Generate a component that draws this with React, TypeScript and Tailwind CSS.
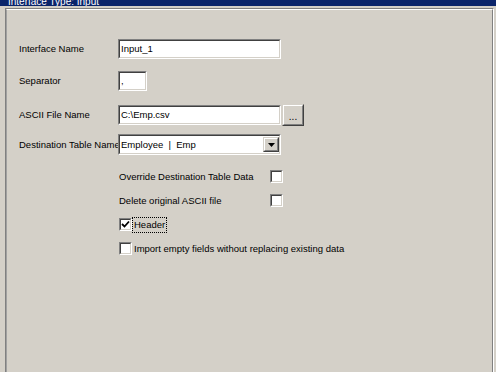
import React from "react";

function Sunken({ className = "", children }: { className?: string; children?: React.ReactNode }) {
  return (
    <div className={`border border-t-[#808080] border-l-[#808080] border-b-white border-r-white ${className}`}>
      <div className="h-full w-full border border-t-[#404040] border-l-[#404040] border-b-[#d4d0c8] border-r-[#d4d0c8] bg-white flex items-center">
        {children}
      </div>
    </div>
  );
}

function Raised({ className = "", children }: { className?: string; children?: React.ReactNode }) {
  return (
    <div className={`border border-t-[#d4d0c8] border-l-[#d4d0c8] border-b-[#404040] border-r-[#404040] ${className}`}>
      <div className="h-full w-full border border-t-white border-l-white border-b-[#808080] border-r-[#808080] bg-[#d4d0c8] flex items-center justify-center">
        {children}
      </div>
    </div>
  );
}

function CheckBox({ checked = false }: { checked?: boolean }) {
  return (
    <Sunken className="w-[13px] h-[13px] shrink-0">
      {checked ? (
        <svg width="9" height="9" viewBox="0 0 9 9" className="block">
          <polyline points="1,4 3.5,6.5 8,1.5" fill="none" stroke="#000" strokeWidth="1.8" />
        </svg>
      ) : null}
    </Sunken>
  );
}

export default function App() {
  return (
    <div className="w-[496px] h-[372px] bg-[#d4d0c8] overflow-hidden font-[Liberation_Sans,Arial,sans-serif] text-[9.5px] leading-[12px] text-black">
      <div className="h-[6px] bg-[#0a246a] overflow-hidden">
        <div className="-mt-[4px] pl-[8px] text-white text-[10px] leading-[12px] whitespace-nowrap">
          Interface Type: Input
        </div>
      </div>
      <div className="mt-[2px] ml-[5px] w-[489px] h-[400px] border-l border-t border-r border-l-[#808080] border-t-[#808080] border-r-white">
        <div className="h-full border-l border-t border-r border-l-[#a0a0a0] border-t-white border-r-[#808080] pl-[12px] pt-[29px]">
          {/* Interface Name */}
          <div className="flex items-center h-[20px]">
            <div className="w-[99px] shrink-0 whitespace-nowrap">Interface Name</div>
            <Sunken className="w-[163px] h-[20px]">
              <span className="pl-[1px]">Input_1</span>
            </Sunken>
          </div>
          {/* Separator */}
          <div className="flex items-center h-[20px] mt-[12px]">
            <div className="w-[99px] shrink-0 whitespace-nowrap">Separator</div>
            <Sunken className="w-[29px] h-[20px]">
              <span className="pl-[1px]">,</span>
            </Sunken>
          </div>
          {/* ASCII File Name */}
          <div className="flex items-center h-[22px] mt-[13px]">
            <div className="w-[99px] shrink-0 whitespace-nowrap">ASCII File Name</div>
            <Sunken className="w-[163px] h-[20px]">
              <span className="pl-[1px]">C:\Emp.csv</span>
            </Sunken>
            <Raised className="ml-[1px] w-[22px] h-[22px]">
              <span className="mt-[4px] text-[10px]">...</span>
            </Raised>
          </div>
          {/* Destination Table Name */}
          <div className="flex items-center h-[21px] mt-[8px]">
            <div className="w-[99px] shrink-0 whitespace-nowrap overflow-visible">Destination Table Name</div>
            <Sunken className="w-[163px] h-[21px] relative">
              <span className="pl-[1px] whitespace-pre flex-1">Employee  |  Emp</span>
              <Raised className="w-[16px] h-[15px] mr-0">
                <svg width="7" height="4" viewBox="0 0 7 4" className="block">
                  <polygon points="0,0 7,0 3.5,4" fill="#000" />
                </svg>
              </Raised>
            </Sunken>
          </div>
          {/* Checkboxes */}
          <div className="ml-[100px]">
            <div className="flex items-center h-[13px] mt-[15px]">
              <div className="w-[151px] whitespace-nowrap">Override Destination Table Data</div>
              <CheckBox />
            </div>
            <div className="flex items-center h-[13px] mt-[11px]">
              <div className="w-[151px] whitespace-nowrap">Delete original ASCII file</div>
              <CheckBox />
            </div>
            <div className="flex items-center h-[13px] mt-[11px]">
              <CheckBox checked />
              <span className="border border-dotted border-black px-[1px] leading-[14px] whitespace-nowrap">Header</span>
            </div>
            <div className="flex items-center h-[13px] mt-[11px]">
              <CheckBox />
              <span className="ml-[2px] whitespace-nowrap">Import empty fields without replacing existing data</span>
            </div>
          </div>
        </div>
      </div>
    </div>
  );
}
